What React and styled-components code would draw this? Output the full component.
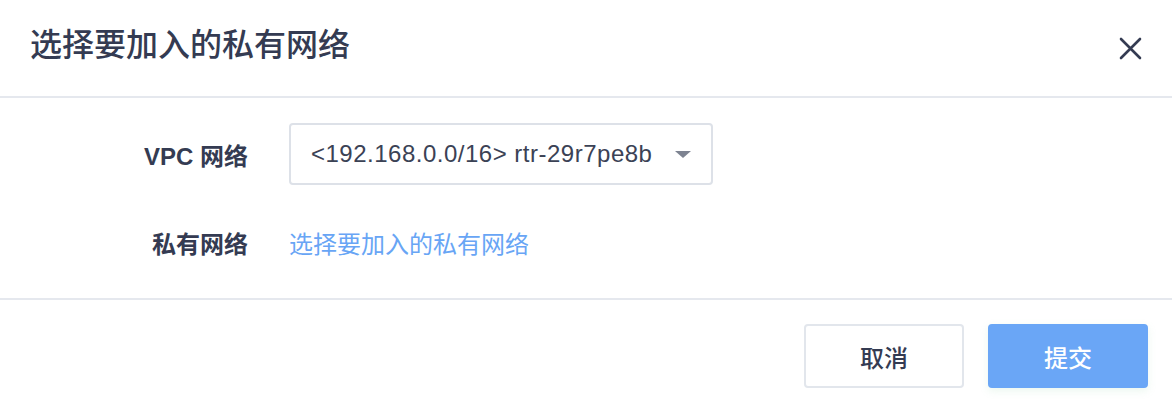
import React from 'react'
import styled, { createGlobalStyle } from 'styled-components'

const GlobalStyle = createGlobalStyle`
    html, body {
        margin: 0;
        padding: 0;
        background: #fff;
    }
    body {
        font-family: "Liberation Sans", "Noto Sans CJK SC", sans-serif;
        color: #343b52;
    }
`

const Dialog = styled.div`
    width: 1172px;
    height: 402px;
    background: #fff;
    overflow: hidden;
    display: flex;
    flex-direction: column;
`

const Header = styled.div`
    height: 98px;
    box-sizing: border-box;
    padding: 26px 30px 0;
    display: flex;
    justify-content: space-between;
    align-items: flex-start;
    border-bottom: 2px solid #e5e8ee;
`

const Title = styled.h2`
    margin: 0;
    font-family: "Noto Sans CJK SC", sans-serif;
    font-size: 32px;
    line-height: 32px;
    font-weight: 500;
    color: #343b52;
`

const CloseButton = styled.button`
    margin-top: 11px;
    padding: 0;
    border: 0;
    background: none;
    width: 23px;
    height: 23px;
    display: flex;
    cursor: pointer;
`

const Body = styled.div`
    padding: 25px 0;
    display: flex;
    flex-direction: column;
    gap: 26px;
    border-bottom: 2px solid #e5e8ee;
`

const Row = styled.div`
    display: grid;
    grid-template-columns: 248px 424px;
    column-gap: 41px;
    align-items: center;
    height: 62px;
`

const Label = styled.div`
    text-align: right;
    font-size: 24px;
    font-weight: 600;
    color: #343b52;
`

const Select = styled.div`
    height: 62px;
    box-sizing: border-box;
    border: 2px solid #dde1e8;
    border-radius: 4px;
    padding: 0 20px 0 20px;
    display: flex;
    align-items: center;
    justify-content: space-between;
    font-size: 24px;
    letter-spacing: 0.5px;
    color: #3b4255;
`

const Caret = styled.span`
    width: 0;
    height: 0;
    border-left: 8px solid transparent;
    border-right: 8px solid transparent;
    border-top: 7px solid #7d8391;
`

const Link = styled.a`
    font-family: "Noto Sans CJK SC", sans-serif;
    font-size: 24px;
    color: #68a5f5;
    text-decoration: none;
    cursor: pointer;
`

const Footer = styled.div`
    padding: 24px 24px 0;
    display: flex;
    justify-content: flex-end;
    gap: 24px;
`

const Button = styled.button`
    width: 160px;
    height: 64px;
    box-sizing: border-box;
    border-radius: 4px;
    font-family: "Noto Sans CJK SC", sans-serif;
    font-size: 24px;
    font-weight: 500;
    cursor: pointer;
    border: 2px solid ${props => props.primary ? '#6aa6f6' : '#e2e6ec'};
    background: ${props => props.primary ? '#6aa6f6' : '#fff'};
    color: ${props => props.primary ? '#fff' : '#343b52'};
    box-shadow: ${props => props.primary ? '0 3px 8px rgba(120, 200, 150, 0.15)' : 'none'};
`

const CloseIcon = () => (
    <svg width="23" height="23" viewBox="0 0 23 23">
        <path d="M2 2 L21 21 M21 2 L2 21" stroke="#343b52" strokeWidth="2.6" strokeLinecap="round" />
    </svg>
)

export default function App() {
    return (
        <Dialog>
            <GlobalStyle />
            <Header>
                <Title>选择要加入的私有网络</Title>
                <CloseButton aria-label="close"><CloseIcon /></CloseButton>
            </Header>
            <Body>
                <Row>
                    <Label>VPC 网络</Label>
                    <Select>
                        <span>&lt;192.168.0.0/16&gt; rtr-29r7pe8b</span>
                        <Caret />
                    </Select>
                </Row>
                <Row>
                    <Label>私有网络</Label>
                    <Link>选择要加入的私有网络</Link>
                </Row>
            </Body>
            <Footer>
                <Button>取消</Button>
                <Button primary>提交</Button>
            </Footer>
        </Dialog>
    )
}
